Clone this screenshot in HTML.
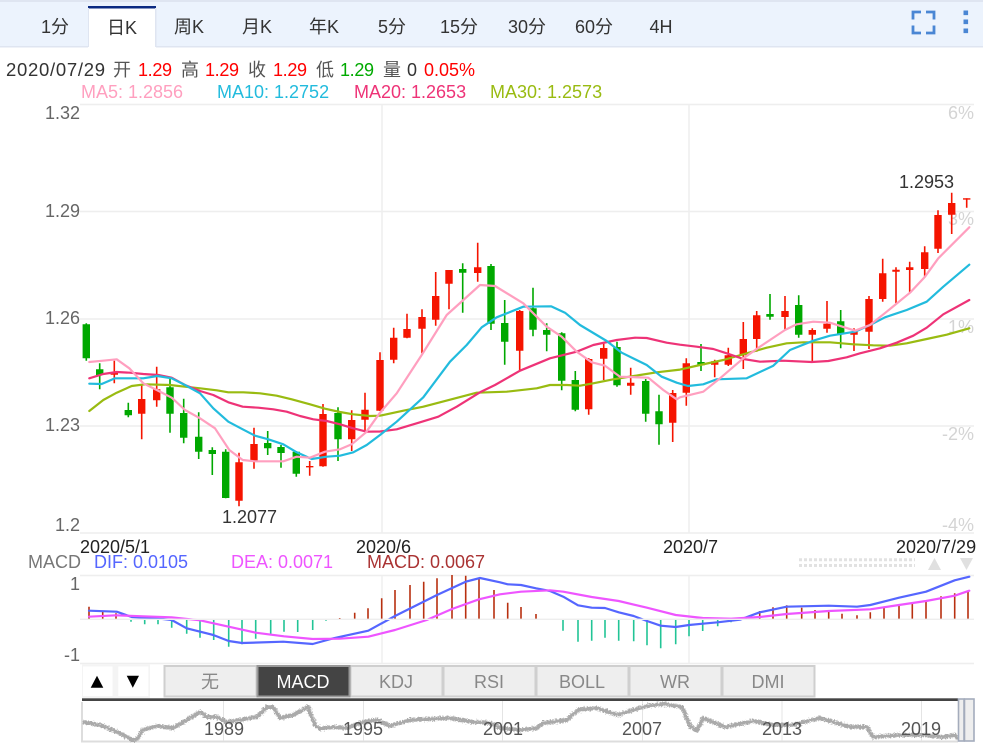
<!DOCTYPE html>
<html lang="zh">
<head>
<meta charset="utf-8">
<title>K线图</title>
<style>
html,body{margin:0;padding:0;background:#fff;}
body{width:983px;height:755px;overflow:hidden;}
svg{display:block;}
text{font-family:"Liberation Sans","Noto Sans CJK SC",sans-serif;font-size:18px;}
.t{fill:#333;text-anchor:middle;}
.l{fill:#666;text-anchor:end;}
.p{fill:#d4d4d4;text-anchor:end;}
.b{fill:#888;text-anchor:middle;}
.n{fill:#555;text-anchor:middle;}
.ma{fill:none;stroke-width:2.2;stroke-linejoin:round;stroke-linecap:round;}
</style>
</head>
<body>
<svg width="983" height="755" viewBox="0 0 983 755" xmlns="http://www.w3.org/2000/svg">
<defs>
<filter id="noise" x="-2%" y="-30%" width="104%" height="160%">
<feTurbulence type="fractalNoise" baseFrequency="0.7" numOctaves="2" seed="4"/>
<feDisplacementMap in="SourceGraphic" scale="5" xChannelSelector="R" yChannelSelector="G"/>
</filter>
</defs>
<rect width="983" height="755" fill="#fff"/>

<!-- top bar -->
<rect x="0" y="0" width="983" height="2" fill="#dfe5f1"/>
<rect x="0" y="2" width="983" height="44" fill="#ecf3fd"/>
<rect x="0" y="46" width="983" height="1.5" fill="#dfe5f1"/>
<rect x="88" y="6" width="68" height="42" fill="#fff"/>
<rect x="88" y="6" width="68" height="2.5" fill="#0b2a82"/>
<rect x="155" y="8" width="1.5" height="39" fill="#dfe5f1"/>
<rect x="88" y="8" width="1" height="39" fill="#dfe5f1"/>
<text class="t" x="55" y="33">1分</text>
<text class="t" x="122" y="34">日K</text>
<text class="t" x="189" y="33">周K</text>
<text class="t" x="257" y="33">月K</text>
<text class="t" x="324" y="33">年K</text>
<text class="t" x="392" y="33">5分</text>
<text class="t" x="459" y="33">15分</text>
<text class="t" x="527" y="33">30分</text>
<text class="t" x="594" y="33">60分</text>
<text class="t" x="661" y="33">4H</text>
<path d="M921 12H913V19.5M926 12H934V19.5M921 33H913V25.5M926 33H934V25.5" fill="none" stroke="#4a86d4" stroke-width="2.8"/>
<path d="M963.5 10.5h4.6v4.6h-4.6zM963.5 19.5h4.6v4.6h-4.6zM963.5 28.5h4.6v4.6h-4.6z" fill="#4a86d4"/>

<!-- info rows -->
<text x="6" y="76" fill="#333" textLength="99" style="font-size:18.5px">2020/07/29</text>
<text x="113" y="76" fill="#555">开</text>
<text x="138" y="76" fill="#f00" textLength="34">1.29</text>
<text x="181" y="76" fill="#555">高</text>
<text x="205" y="76" fill="#f00" textLength="34">1.29</text>
<text x="248" y="76" fill="#555">收</text>
<text x="273" y="76" fill="#f00" textLength="34">1.29</text>
<text x="316" y="76" fill="#555">低</text>
<text x="340" y="76" fill="#0a0" textLength="34">1.29</text>
<text x="383" y="76" fill="#555">量</text>
<text x="407" y="76" fill="#333">0</text>
<text x="424" y="76" fill="#f00" textLength="51">0.05%</text>
<text x="81" y="98" fill="#ff9fbf">MA5: 1.2856</text>
<text x="217" y="98" fill="#22bbdd">MA10: 1.2752</text>
<text x="354" y="98" fill="#ee3377">MA20: 1.2653</text>
<text x="490" y="98" fill="#99bb11">MA30: 1.2573</text>

<!-- main grid -->
<path d="M80 104.5H974M80 211.5H974M80 319H974M80 426H974M80 533H974M382 104V533M689 104V533" stroke="#eee" stroke-width="1.5" fill="none"/>
<text class="l" x="80" y="119">1.32</text>
<text class="l" x="80" y="217">1.29</text>
<text class="l" x="80" y="324">1.26</text>
<text class="l" x="80" y="431">1.23</text>
<text class="l" x="80" y="531">1.2</text>
<text class="p" x="974" y="119">6%</text>
<text class="p" x="974" y="225">3%</text>
<text class="p" x="974" y="333">1%</text>
<text class="p" x="974" y="440">-2%</text>
<text class="p" x="974" y="531">-4%</text>

<!-- candle wicks -->
<path stroke="#00a800" stroke-width="1.6" fill="none" d="M86.3 323.3V360.7M99.7 363.3V389.3M128.3 402.7V417.3M170 378.3V432.7M183.7 398.7V443.3M198.7 412.3V459M212.3 447.3V475M225.7 449.3V498.3M267.7 431V455M281 445V467.7M296.3 451V476.7M338 407.3V461M462.7 263.3V312.7M491 264V330M504.7 300V364.7M533 287.7V336.3M546.7 323.3V351.3M561.7 332.3V390.3M575.3 371V411.3M617 341.7V386.7M645.7 379V421.7M659 394.7V444.7M701 344V371M770 294V319.7M798.7 295.3V337.7M840.7 310V348.3"/>
<path stroke="#f51400" stroke-width="1.6" fill="none" d="M114.3 360.7V383.3M141.7 385V439.3M156.7 366.7V406.7M239 452.7V506.3M254 427.7V468.7M309.7 461V475.7M323 404V466.7M351.7 410.3V451M365 392.7V431.7M380 352.3V411M393.7 327.7V363.3M407 313.7V338.3M422 309.3V353.3M435.7 272V325.7M449 270V309.3M477.7 242.7V281.7M519.7 310V370M588.7 358V414.7M603.7 343.3V380M630.7 367.7V394.7M672.7 390V442M686.3 358.3V405.7M714.7 359.7V377.3M728.3 347.7V366M743.3 322V369M756.7 311V351.7M785 296V330M812.3 328.3V362.7M827 301V332.7M854 328.3V351M869 296V349M882.7 258.7V301.7M896 267.3V303.3M909.7 261.7V292.7M924.7 246.3V277.3M938 210.3V253M951.7 192.7V234M966.7 198.3V207.7"/>
<!-- candle bodies -->
<path fill="#00a800" d="M82.6 324.3h7.4V358.3h-7.4zM96 369.3h7.4V375h-7.4zM124.6 410h7.4V415.3h-7.4zM166.3 387.3h7.4V413.7h-7.4zM180 413h7.4V437.7h-7.4zM195 436.7h7.4V451.7h-7.4zM208.6 450h7.4V454h-7.4zM222 451.7h7.4V498h-7.4zM264 443h7.4V448.3h-7.4zM277.3 447h7.4V453h-7.4zM292.6 451.7h7.4V473.7h-7.4zM334.3 413h7.4V439.3h-7.4zM459 269h7.4V272.7h-7.4zM487.3 266h7.4V323.7h-7.4zM501 323h7.4V341.7h-7.4zM529.3 308.3h7.4V329.7h-7.4zM543 330h7.4V334.7h-7.4zM558 333.3h7.4V380.7h-7.4zM571.6 380h7.4V409.7h-7.4zM613.3 347h7.4V385.3h-7.4zM642 381h7.4V413.7h-7.4zM655.3 411.3h7.4V424.3h-7.4zM697.3 362h7.4V365.3h-7.4zM766.3 314h7.4V316.7h-7.4zM795 305h7.4V334.7h-7.4zM837 321.3h7.4V333.7h-7.4z"/>
<path fill="#f51400" d="M110.6 372.3h7.4V374.7h-7.4zM138 399h7.4V413.7h-7.4zM153 389.3h7.4V400.3h-7.4zM235.3 462.3h7.4V500.7h-7.4zM250.3 444h7.4V460.7h-7.4zM306 466h7.4V467.4h-7.4zM319.3 414h7.4V466.3h-7.4zM348 420h7.4V439.3h-7.4zM361.3 409.7h7.4V419.7h-7.4zM376.3 360h7.4V410.7h-7.4zM390 337.7h7.4V359.7h-7.4zM403.3 329h7.4V337.7h-7.4zM418.3 317h7.4V328.7h-7.4zM432 296h7.4V319.7h-7.4zM445.3 270h7.4V283.7h-7.4zM474 267.3h7.4V273h-7.4zM516 311h7.4V350.7h-7.4zM585 359h7.4V409.3h-7.4zM600 348h7.4V358.7h-7.4zM627 382.7h7.4V385.7h-7.4zM669 393h7.4V422.7h-7.4zM682.6 363.3h7.4V392.7h-7.4zM711 361.3h7.4V364.7h-7.4zM724.6 355.3h7.4V364.7h-7.4zM739.6 339h7.4V355.3h-7.4zM753 315.3h7.4V339h-7.4zM781.3 311h7.4V317h-7.4zM808.6 330h7.4V334.7h-7.4zM823.3 323.7h7.4V328.7h-7.4zM850.3 331.7h7.4V334.7h-7.4zM865.3 299h7.4V331.7h-7.4zM879 273.3h7.4V299h-7.4zM892.3 269.7h7.4V271.7h-7.4zM906 267.3h7.4V270h-7.4zM921 252.3h7.4V269h-7.4zM934.3 215h7.4V248.7h-7.4zM948 203h7.4V214.7h-7.4zM963 198.3h7.4V199.6h-7.4z"/>

<!-- moving averages -->
<polyline class="ma" stroke="#99bb11" points="89.3,411 103.3,400 116.7,392.7 131.7,386 145,384.3 170,385 185,386.7 200,388.3 216.7,390.3 228.3,392.3 243.3,392.3 260,393.3 276.7,395.7 291.7,399.3 310,404.3 325,408.7 340,412 353.3,414.3 370,416 380,415.7 403.3,410.7 423.3,406.7 440,402.3 476.7,392.7 506.7,391.7 536.7,388.3 550,385 566.7,385 580,385.7 593.3,383.3 613.3,379.3 640,375 656.7,372.3 680,369.6 700,365 723.3,360 746.7,353.3 766.7,347.7 786.7,343.3 803.3,342.3 830,342.3 853.3,344.3 873.3,345.3 890,345.7 906.7,343.3 926.7,339 946.7,334.7 969.3,328.3"/>
<polyline class="ma" stroke="#ee3377" points="89.3,378.3 103.3,374 116.7,372 130,372.7 143.3,374 158.3,375 171.7,377.7 185,385 200,391 213.3,395 228.3,402.3 242.7,406.7 258.3,407.7 273.3,409.3 286.7,411.7 300,416 313.3,419.3 326.7,421 340,424.3 353.3,428.3 366.7,431.7 380,431.5 396.7,429.3 420,422.3 438.3,416.7 456.7,406.7 480,392.3 495,385 520,370.7 550,358.3 576.7,351.7 593.3,345 616.7,340 635,337.7 646.7,338 666.7,342.7 680,344.7 696.7,346.7 713.3,349 726.7,353.3 743.3,359 760,361.7 783.3,360.7 811.7,362 828.3,361 846.7,357.3 860,353.3 880,348.3 896.7,342.7 913.3,335.7 926.7,327.7 943.3,314.3 969.3,300"/>
<polyline class="ma" stroke="#22bbdd" points="89.3,383.7 101.7,384 115,378.3 143.3,378.3 157.3,376 171.7,378.3 185,385 200,393.3 213.3,408.3 228.3,421.7 242.7,429.3 255,435.7 268.3,439.3 283.3,444.3 296.7,452.3 311.7,459 326.7,456.7 340,455.7 353.3,452.3 366.7,445 380,435 396.7,421.7 423.3,397.3 450,361.7 466.7,345 481.7,327.3 496.7,317.3 523.3,306.7 551,306.3 565,312.7 580,325 606.7,341 621.7,352.7 646.7,365 661.7,376.7 676.7,382.7 688,386 703.3,384.3 716.7,379.3 746.7,378.3 773.3,365.7 790,350 813.3,340.7 830,335.7 855,331.7 870,325 885,317.3 906.7,310 926.7,301.7 943.3,286.7 969.3,264.7"/>
<polyline class="ma" stroke="#ff9fbf" points="89.3,362 103,360.7 116.7,359.3 129.3,368.3 143.3,383.3 156.7,390 171.7,397.7 185,410 200,418.3 215,428.3 229.3,450 242.7,460 255,461.3 270,461.3 283.3,461.3 296.7,456.7 310,457.7 325,451.7 340,449.3 351.7,444.3 366,432.3 380,412.7 396.7,393.3 421.7,355 446.7,315 480,285 495,286 523.3,303.3 546.7,326.7 561.7,336.7 576.7,351.7 591.7,362.3 605,365.7 620,376.7 648.3,377.7 663.3,390 676.7,399.3 680,397.3 703.3,391.7 720,378.3 743.3,358.3 760,346.7 785,330 796.7,324.3 813.3,321.7 830,322.7 855,330.7 870,325 886.7,311.7 910,292.7 925,276.7 938.3,258.3 953.3,243.3 969.3,227.3"/>

<text x="899" y="188" fill="#333">1.2953</text>
<text x="222" y="523" fill="#333">1.2077</text>

<!-- date axis -->
<text x="80" y="553" fill="#222">2020/5/1</text>
<text x="356" y="553" fill="#222">2020/6</text>
<text x="663" y="553" fill="#222">2020/7</text>
<text x="896" y="553" fill="#222">2020/7/29</text>

<!-- MACD legend -->
<text x="28" y="568" fill="#777">MACD</text>
<text x="94" y="568" fill="#5566ff">DIF: 0.0105</text>
<text x="231" y="568" fill="#ee55ff">DEA: 0.0071</text>
<text x="367" y="568" fill="#aa3333">MACD: 0.0067</text>

<!-- scroll dots + arrows -->
<path d="M799 559.7H915M799 565.5H915" stroke="#e2e2e2" stroke-width="3" stroke-dasharray="3 2" fill="none"/>
<path d="M934.5 558L941 570H928zM960 558H973L966.5 570z" fill="#e0e0e0"/>

<!-- MACD panel -->
<path d="M80 575.5H974M80 663.5H974M382 575V663M689 575V663" stroke="#eee" stroke-width="1.4" fill="none"/>
<text class="l" x="80" y="590">1</text>
<text class="l" x="80" y="661">-1</text>
<path stroke="#b83010" stroke-width="1.6" fill="none" d="M89 619V606.7M102.7 619V611M116 619V613.3M339.7 619V618M354.7 619V612.7M368 619V608.3M381.7 619V598.3M395 619V590M410 619V585M423.7 619V581.7M437 619V578.3M452 619V575M465.7 619V575.7M479 619V577.7M494 619V590M507.7 619V602.7M521 619V607M536 619V614M746 619V618M759.7 619V611M773 619V607.3M786.7 619V605.3M801.7 619V607.7M815 619V610M828.7 619V610.7M842 619V613.7M857 619V615.3M870.3 619V612.3M884 619V607M899 619V604.3M912.3 619V602.7M926 619V601.3M941 619V596.3M954.7 619V593.3M968 619V591.7"/>
<path stroke="#22c496" stroke-width="1.6" fill="none" d="M131 619V621.7M144.7 619V624.3M158 619V624.3M171.7 619V627.7M186.7 619V633.7M200 619V637.7M213.7 619V640M228.7 619V646.7M242 619V644.3M255.7 619V638.7M270.7 619V634.3M284 619V631.7M297.7 619V632M312.7 619V630M326 619V620.7M563 619V630.7M578 619V641.7M591.7 619V640.7M605 619V637.7M618.7 619V640.7M633.7 619V641.3M647 619V645.3M660.7 619V648.3M675.7 619V644.3M689 619V636.3M702.7 619V631M717.7 619V626.3M731 619V622.3"/>
<polyline class="ma" stroke="#5566ff" points="89,610.7 116.7,611.7 131.7,617 156.7,618.3 171.7,620 186.7,628.3 213.3,635 228.7,641 242,643 283.3,641.7 312.7,644 333.3,638.3 368.3,630.7 395,616 437,595 465.7,581.7 480,578 500,582.3 507.7,584.3 521,585 536,588.3 550,591 563.3,596.7 578,605.3 591.7,607.7 605,608 618.7,612.3 633.7,616 647,621 660.7,625.7 675.7,627 689,625 702.7,623.7 717.7,622.3 740,619.7 759.7,612.3 786.7,606.7 828.7,605.7 857,606.7 870.3,605 899,597.7 926,591.7 954.7,580.3 969.3,576.7"/>
<polyline class="ma" stroke="#ee55ff" points="89,616.7 116,615.3 143.3,616.3 171.7,617.3 200,620.3 228.7,626.7 255.7,632.7 284,636.3 312.7,639 339.7,638.7 368.3,636.7 395,630 426.7,620 452,609 479,599.3 500,594.3 521,591.7 550,590.3 563.3,591.7 591.7,597 618.7,601 647,607.7 675.7,615 702.7,618 731,618.7 759.7,617 786.7,614 828.7,611 870.3,609.3 899,605 926,601 954.7,595.7 969.3,590.7"/>
<path d="M80 619.3H974" stroke="#eee" stroke-width="1.4" fill="none"/>

<!-- controls -->
<rect x="82" y="664.5" width="68" height="33.5" fill="#f4f4f4"/>
<rect x="83" y="666.5" width="29.5" height="29.5" fill="#fff"/>
<rect x="118.3" y="666.5" width="30" height="29.5" fill="#fff"/>
<path d="M90.7 687.7L97 675.7L103.3 687.7z" fill="#000"/>
<path d="M126.7 675.7H139L132.8 687.7z" fill="#000"/>
<g fill="#eee" stroke="#cfcfcf" stroke-width="2">
<rect x="164.5" y="666" width="92" height="30.5"/>
<rect x="350.5" y="666" width="92" height="30.5"/>
<rect x="443.5" y="666" width="92" height="30.5"/>
<rect x="536.5" y="666" width="92" height="30.5"/>
<rect x="629.5" y="666" width="92" height="30.5"/>
<rect x="722.5" y="666" width="92" height="30.5"/>
</g>
<rect x="257.5" y="666" width="92" height="30.5" fill="#444" stroke="#999" stroke-width="2"/>
<text class="b" x="210" y="688">无</text>
<text x="303" y="688" fill="#fff" text-anchor="middle">MACD</text>
<text class="b" x="396" y="688">KDJ</text>
<text class="b" x="489" y="688">RSI</text>
<text class="b" x="582" y="688">BOLL</text>
<text class="b" x="675" y="688">WR</text>
<text class="b" x="768" y="688">DMI</text>

<!-- navigator -->
<path d="M82 702V741.5H958" fill="none" stroke="#ddd" stroke-width="2"/>
<path d="M223.5 701V741M363.5 701V741M502.5 701V741M642.5 701V741M782 701V741M921.5 701V741" stroke="#e4e4e4" stroke-width="1" fill="none"/>
<polyline fill="none" stroke="#aaa" stroke-width="4" stroke-linejoin="round" filter="url(#noise)" points="83,722 90,723 103,726 115,731 127,737 132,740 137,739 143,730 157,726 173,728 187,720 200,712 207,717 217,717 227,722 240,720 257,717 267,707 273,707 280,718 293,715 308,707 315,725 320,729 333,727 347,728 363,722 377,720 390,726 410,720 430,719 450,718 473,722 490,723 500,728 520,730 537,728 543,723 567,720 578,710 597,708 617,715 633,710 647,706 663,704 682,707 690,726 697,731 703,718 725,727 753,721 773,725 793,725 820,718 850,727 867,727 873,737 900,735 923,735 943,737 955,735 958,739"/>
<rect x="82" y="698.3" width="876" height="2.7" fill="#444"/>
<text class="n" x="224" y="735">1989</text>
<text class="n" x="363" y="735">1995</text>
<text class="n" x="503" y="735">2001</text>
<text class="n" x="642" y="735">2007</text>
<text class="n" x="782" y="735">2013</text>
<text class="n" x="921" y="735">2019</text>
<rect x="958.5" y="699" width="5.5" height="42" fill="#eee" stroke="#a4acbc" stroke-width="1.6"/>
<rect x="964.5" y="699" width="9.5" height="42" fill="#eee" stroke="#a4acbc" stroke-width="1.6"/>
</svg>
</body>
</html>
